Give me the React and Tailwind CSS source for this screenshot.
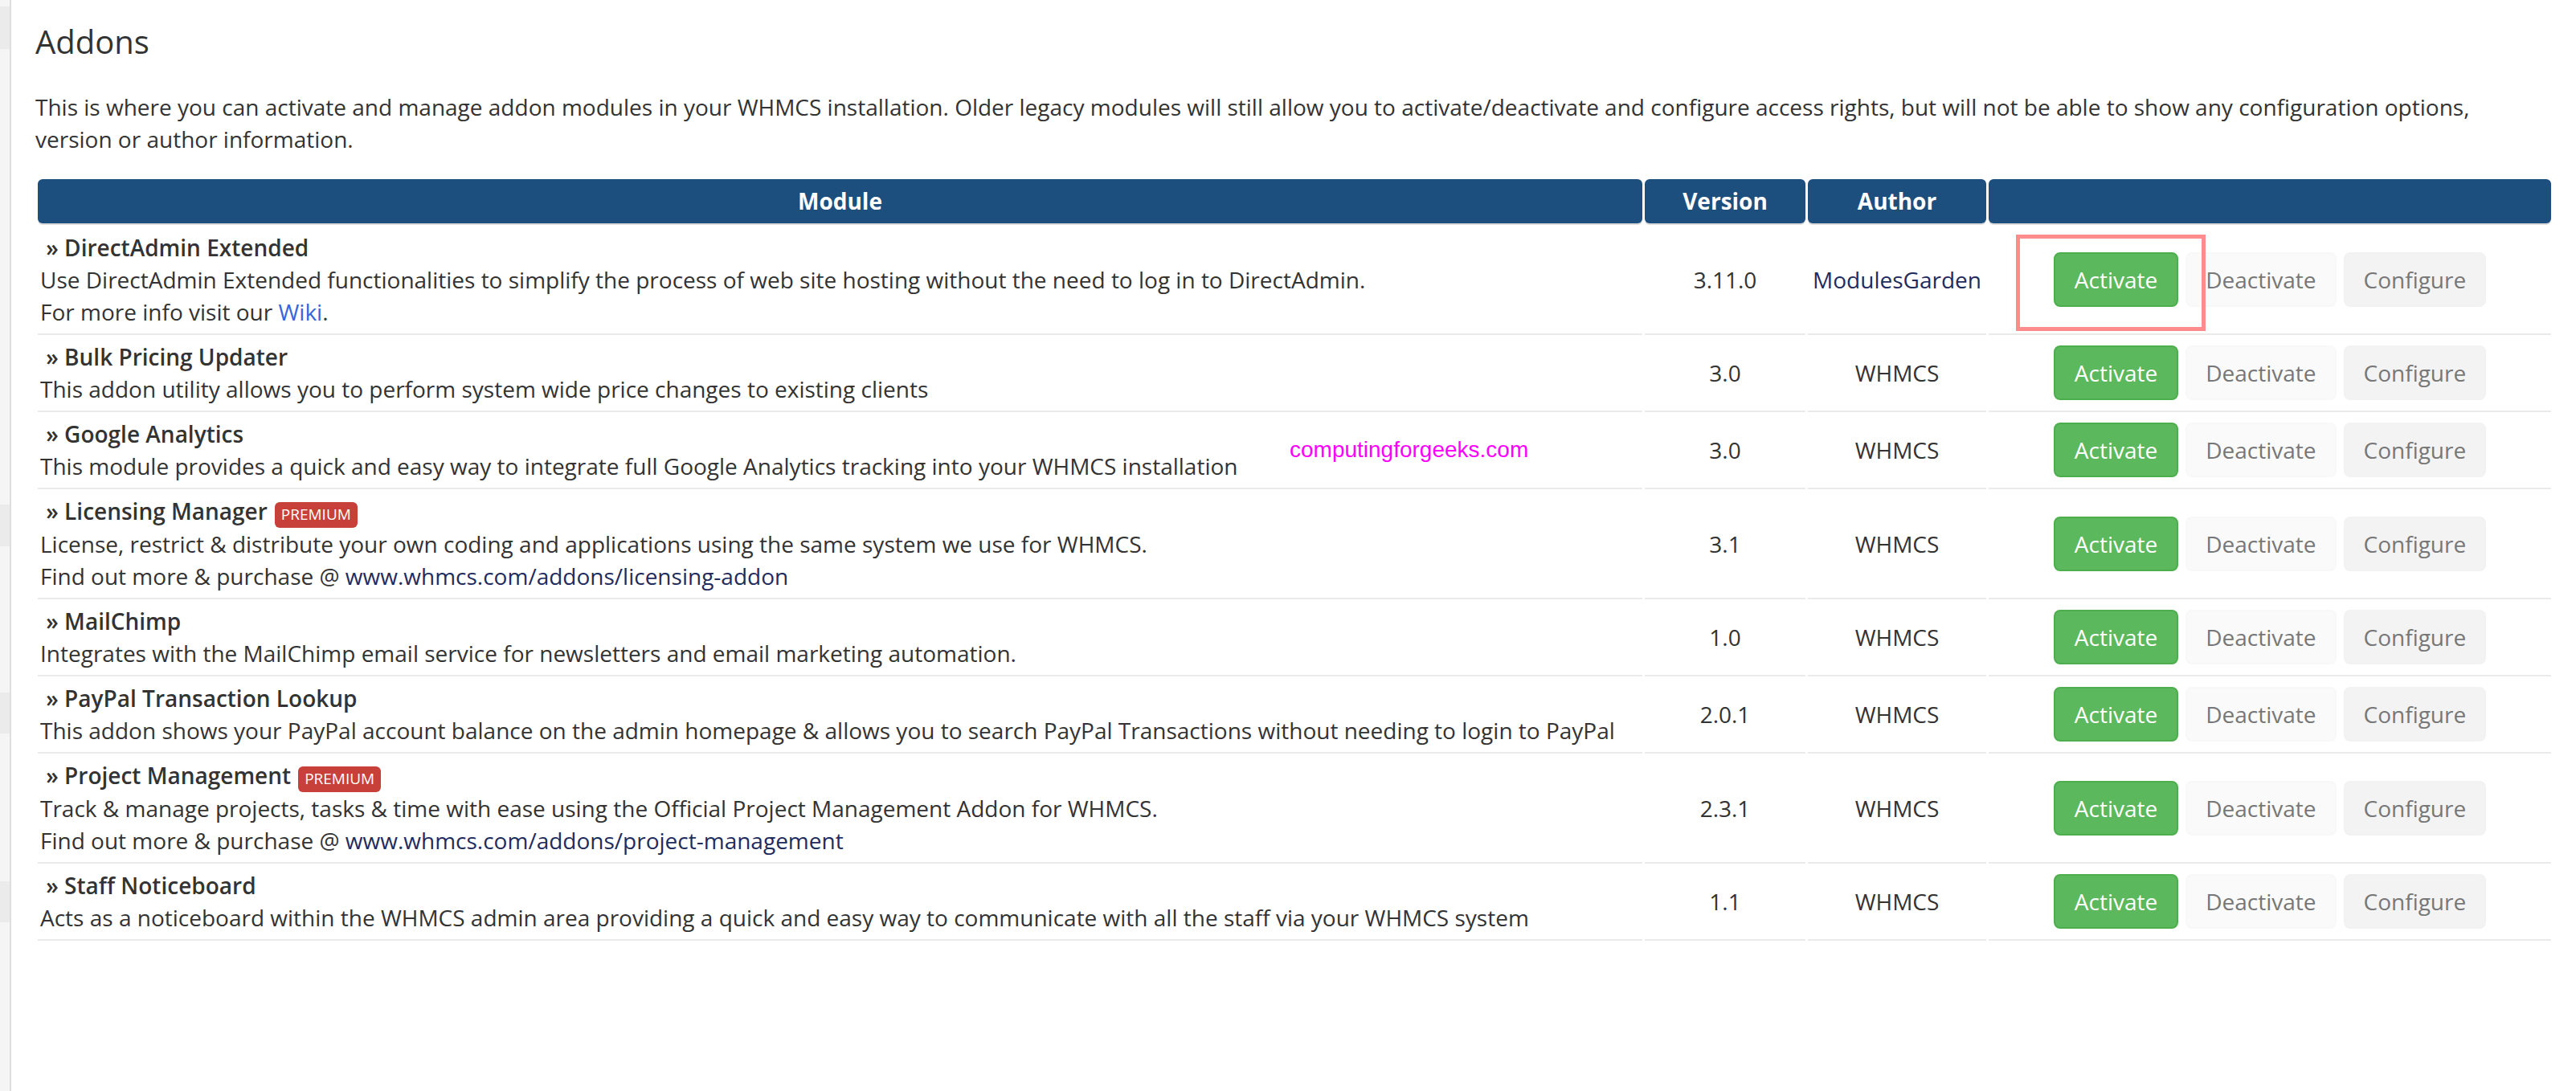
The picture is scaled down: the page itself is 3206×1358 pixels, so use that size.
import React from "react";

const rows = [
  {
    name: "DirectAdmin Extended",
    lines: [
      "Use DirectAdmin Extended functionalities to simplify the process of web site hosting without the need to log in to DirectAdmin.",
    ],
    wiki: true,
    version: "3.11.0",
    author: "ModulesGarden",
    authorLink: true,
    highlight: true,
  },
  {
    name: "Bulk Pricing Updater",
    lines: ["This addon utility allows you to perform system wide price changes to existing clients"],
    version: "3.0",
    author: "WHMCS",
  },
  {
    name: "Google Analytics",
    lines: ["This module provides a quick and easy way to integrate full Google Analytics tracking into your WHMCS installation"],
    version: "3.0",
    author: "WHMCS",
  },
  {
    name: "Licensing Manager",
    premium: true,
    lines: ["License, restrict & distribute your own coding and applications using the same system we use for WHMCS."],
    link: "www.whmcs.com/addons/licensing-addon",
    version: "3.1",
    author: "WHMCS",
  },
  {
    name: "MailChimp",
    lines: ["Integrates with the MailChimp email service for newsletters and email marketing automation."],
    version: "1.0",
    author: "WHMCS",
  },
  {
    name: "PayPal Transaction Lookup",
    lines: [
      "This addon shows your PayPal account balance on the admin homepage & allows you to search PayPal Transactions without needing to login to PayPal",
    ],
    version: "2.0.1",
    author: "WHMCS",
  },
  {
    name: "Project Management",
    premium: true,
    lines: ["Track & manage projects, tasks & time with ease using the Official Project Management Addon for WHMCS."],
    link: "www.whmcs.com/addons/project-management",
    version: "2.3.1",
    author: "WHMCS",
  },
  {
    name: "Staff Noticeboard",
    lines: [
      "Acts as a noticeboard within the WHMCS admin area providing a quick and easy way to communicate with all the staff via your WHMCS system",
    ],
    version: "1.1",
    author: "WHMCS",
  },
];

function Buttons({ highlight }) {
  return (
    <div className="flex items-center justify-center gap-[9px]">
      <span className="relative inline-flex">
        <span className="inline-flex h-[68px] items-center justify-center rounded-[8px] border-2 border-[#4cae4c] bg-[#5cb85c] px-[24px] text-[28px] leading-[40px] text-white">
          Activate
        </span>
        {highlight && (
          <span className="absolute -left-[47px] -top-[22px] h-[120px] w-[236px] border-[5px] border-[#ff8c8c]"></span>
        )}
      </span>
      <span className="inline-flex h-[68px] items-center justify-center rounded-[8px] border-2 border-[#f8f8f8] bg-[#fafafa] px-[23px] text-[28px] leading-[40px] text-[#777777]">
        Deactivate
      </span>
      <span className="inline-flex h-[68px] items-center justify-center rounded-[8px] border-2 border-[#f2f2f2] bg-[#f3f3f3] px-[23px] text-[28px] leading-[40px] text-[#777777]">
        Configure
      </span>
    </div>
  );
}

function Row({ r }) {
  return (
    <div className="grid grid-cols-[1fr_200px_222px_700px] gap-x-[3px]">
      <div className="border-b-2 border-[#eaeaea] py-[7px] pl-[3px] text-[28px] leading-[40px]">
        <div className="font-semibold text-[#333333]">
          {"\u00a0» " + r.name}
          {r.premium && (
            <span className="ml-[9px] inline-block rounded-[6px] bg-[#c8403a] px-[8px] pb-[4px] pt-[2px] align-baseline text-[19px] font-normal leading-[26px] text-white">
              PREMIUM
            </span>
          )}
        </div>
        {r.lines.map((l, i) => (
          <div key={i}>{l}</div>
        ))}
        {r.wiki && (
          <div>
            For more info visit our <span className="text-[#3566dd]">Wiki</span>.
          </div>
        )}
        {r.link && (
          <div>
            Find out more &amp; purchase @ <span className="text-[#1f2c5e]">{r.link}</span>
          </div>
        )}
      </div>
      <div className="flex items-center justify-center border-b-2 border-[#eaeaea] text-[28px] leading-[40px]">
        {r.version}
      </div>
      <div
        className={
          "flex items-center justify-center border-b-2 border-[#eaeaea] text-[28px] leading-[40px] " +
          (r.authorLink ? "text-[#1f2c5e]" : "")
        }
      >
        {r.author}
      </div>
      <div className="flex items-center justify-center border-b-2 border-[#eaeaea]">
        <Buttons highlight={r.highlight} />
      </div>
    </div>
  );
}

export default function App() {
  return (
    <div className="relative flex h-[1358px] w-[3206px] overflow-hidden bg-white font-['Open_Sans',sans-serif] text-[#333333]">
      <div className="flex w-[14px] shrink-0 flex-col border-r-2 border-[#dedede] bg-[#f5f5f5]">
        <div className="mt-[8px] h-[53px] bg-[#ebebeb]"></div>
        <div className="mt-[567px] h-[52px] bg-[#ebebeb]"></div>
        <div className="mt-[182px] h-[51px] bg-[#ebebeb]"></div>
        <div className="mt-[184px] h-[51px] bg-[#ebebeb]"></div>
      </div>
      <div className="flex-1 pl-[30px] pr-[28px]">
        <h1 className="mt-[30px] text-[40px] font-normal leading-[44px] text-[#333333]">Addons</h1>
        <p className="mt-[39px] w-[3100px] text-[28px] leading-[40px]">
          This is where you can activate and manage addon modules in your WHMCS installation. Older legacy modules will
          still allow you to activate/deactivate and configure access rights, but will not be able to show any
          configuration options, version or author information.
        </p>
        <div className="mt-[30px] px-[3px]">
          <div className="grid grid-cols-[1fr_200px_222px_700px] gap-x-[3px] text-[28px] font-bold leading-[55px] text-white">
            <div className="h-[55px] rounded-[6px] bg-[#1c4e7e] text-center shadow-[0_2px_0_#dcdcdc]">Module</div>
            <div className="h-[55px] rounded-[6px] bg-[#1c4e7e] text-center shadow-[0_2px_0_#dcdcdc]">Version</div>
            <div className="h-[55px] rounded-[6px] bg-[#1c4e7e] text-center shadow-[0_2px_0_#dcdcdc]">Author</div>
            <div className="h-[55px] rounded-[6px] bg-[#1c4e7e] text-center shadow-[0_2px_0_#dcdcdc]"></div>
          </div>
          <div className="mt-[3px]">
            {rows.map((r, i) => (
              <Row key={i} r={r} />
            ))}
          </div>
        </div>
      </div>
      <div className="absolute left-[1605px] top-[546px] font-['Liberation_Sans',Arial,sans-serif] text-[28px] leading-[28px] text-[#ff00ff]">
        computingforgeeks.com
      </div>
    </div>
  );
}
